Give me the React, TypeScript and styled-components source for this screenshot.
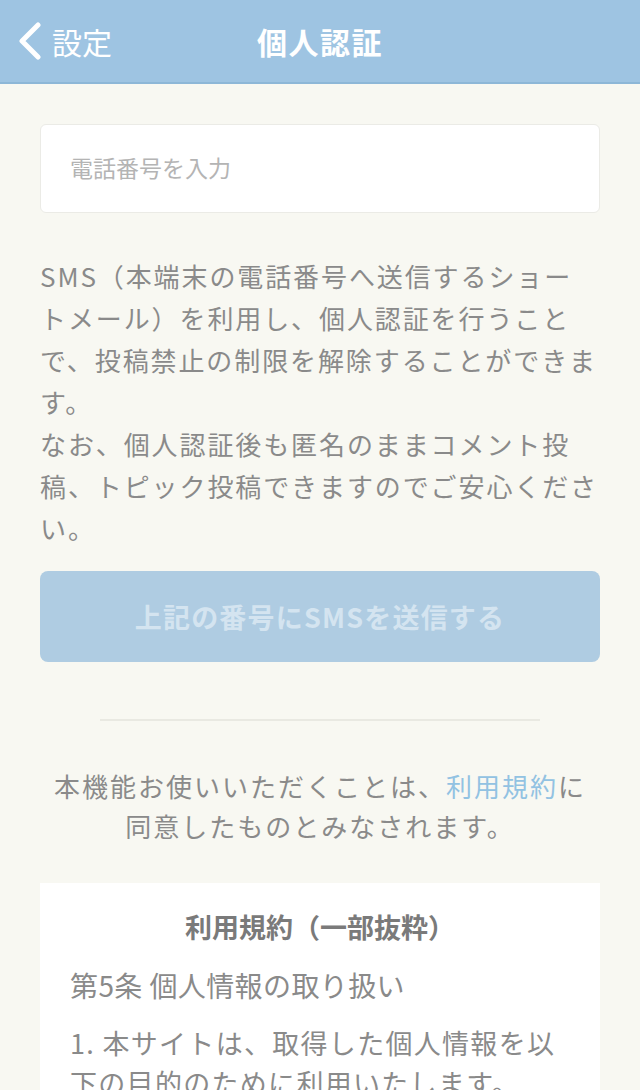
import styled, { createGlobalStyle } from "styled-components";

const GlobalStyle = createGlobalStyle`
  html, body {
    margin: 0;
    padding: 0;
    background: #f8f8f2;
  }
  body {
    font-family: "Noto Sans CJK JP", "Noto Sans", sans-serif;
    color: #8a8a8a;
  }
`;

const Page = styled.div`
  width: 640px;
  min-height: 1090px;
  background: #f8f8f2;
  overflow: hidden;
`;

const Header = styled.header`
  height: 82px;
  background: #9ec4e2;
  border-bottom: 2px solid #8db7d7;
  display: grid;
  grid-template-columns: 1fr auto 1fr;
  align-items: center;
  color: #fff;
`;

const BackButton = styled.button`
  display: flex;
  align-items: center;
  gap: 8px;
  padding: 0 0 0 16px;
  background: none;
  border: none;
  color: #fff;
  font-family: inherit;
  font-size: 30px;
  cursor: pointer;
  justify-self: start;
`;

const Title = styled.h1`
  margin: 0;
  font-size: 30px;
  font-weight: 700;
  letter-spacing: 1.5px;
  color: #fff;
`;

const Main = styled.main`
  padding: 40px 40px 0;
  display: flex;
  flex-direction: column;
`;

const PhoneInput = styled.input`
  box-sizing: border-box;
  height: 89px;
  width: 100%;
  border: 1px solid #ebebe6;
  border-radius: 6px;
  background: #fff;
  padding: 0 29px 4px;
  font-family: inherit;
  font-size: 23px;
  color: #666;
  outline: none;
  &::placeholder {
    color: #b4b4b4;
  }
`;

const Lead = styled.p`
  margin: 42px 0 0;
  font-size: 26px;
  letter-spacing: 1.9px;
  line-height: 42px;
  color: #8a8a8a;
  white-space: nowrap;
`;

const SendButton = styled.button<{ $disabled?: boolean }>`
  margin-top: 22px;
  height: 91px;
  width: 100%;
  border: none;
  border-radius: 8px;
  background: ${p => (p.$disabled ? "#afcce2" : "#7fb0d8")};
  color: ${p => (p.$disabled ? "#d4e4f0" : "#fff")};
  font-family: inherit;
  font-size: 27px;
  font-weight: 700;
  letter-spacing: 1.2px;
`;

const Divider = styled.hr`
  margin: 57px 60px 0;
  border: none;
  height: 2px;
  background: #e9e9e2;
`;

const Agreement = styled.p`
  margin: 45px 0 0;
  text-align: center;
  font-size: 26px;
  letter-spacing: 2px;
  line-height: 40px;
  color: #8a8a8a;
`;

const TermsLink = styled.a`
  color: #92c2e2;
  text-decoration: none;
`;

const TermsCard = styled.section`
  margin-top: 37px;
  background: #fff;
  padding: 24px 30px 0;
`;

const CardTitle = styled.h2`
  margin: 0;
  text-align: center;
  font-size: 27px;
  font-weight: 700;
  line-height: 40px;
  color: #7a7a7a;
`;

const ArticleTitle = styled.h3`
  margin: 18px 0 0;
  font-size: 28px;
  font-weight: 400;
  letter-spacing: 0.4px;
  line-height: 40px;
  color: #8a8a8a;
`;

const ArticleText = styled.p`
  margin: 18px 0 0;
  font-size: 27px;
  letter-spacing: 1.3px;
  line-height: 40px;
  color: #8a8a8a;
`;

const Chevron = () => (
  <svg width="28" height="38" viewBox="0 0 28 38" fill="none">
    <path d="M22 3 L6 19 L22 35" stroke="#fff" strokeWidth="5" strokeLinecap="round" strokeLinejoin="round" />
  </svg>
);

export default function App() {
  return (
    <Page>
      <GlobalStyle />
      <Header>
        <BackButton>
          <Chevron />
          設定
        </BackButton>
        <Title>個人認証</Title>
        <span />
      </Header>
      <Main>
        <PhoneInput type="tel" placeholder="電話番号を入力" />
        <Lead>
          SMS（本端末の電話番号へ送信するショー<br />
          トメール）を利用し、個人認証を行うこと<br />
          で、投稿禁止の制限を解除することができま<br />
          す。<br />
          なお、個人認証後も匿名のままコメント投<br />
          稿、トピック投稿できますのでご安心くださ<br />
          い。
        </Lead>
        <SendButton $disabled disabled>上記の番号にSMSを送信する</SendButton>
        <Divider />
        <Agreement>
          本機能お使いいただくことは、<TermsLink href="#">利用規約</TermsLink>に<br />
          同意したものとみなされます。
        </Agreement>
        <TermsCard>
          <CardTitle>利用規約（一部抜粋）</CardTitle>
          <ArticleTitle>第5条 個人情報の取り扱い</ArticleTitle>
          <ArticleText>
            1. 本サイトは、取得した個人情報を以<br />
            下の目的のために利用いたします。
          </ArticleText>
        </TermsCard>
      </Main>
    </Page>
  );
}
